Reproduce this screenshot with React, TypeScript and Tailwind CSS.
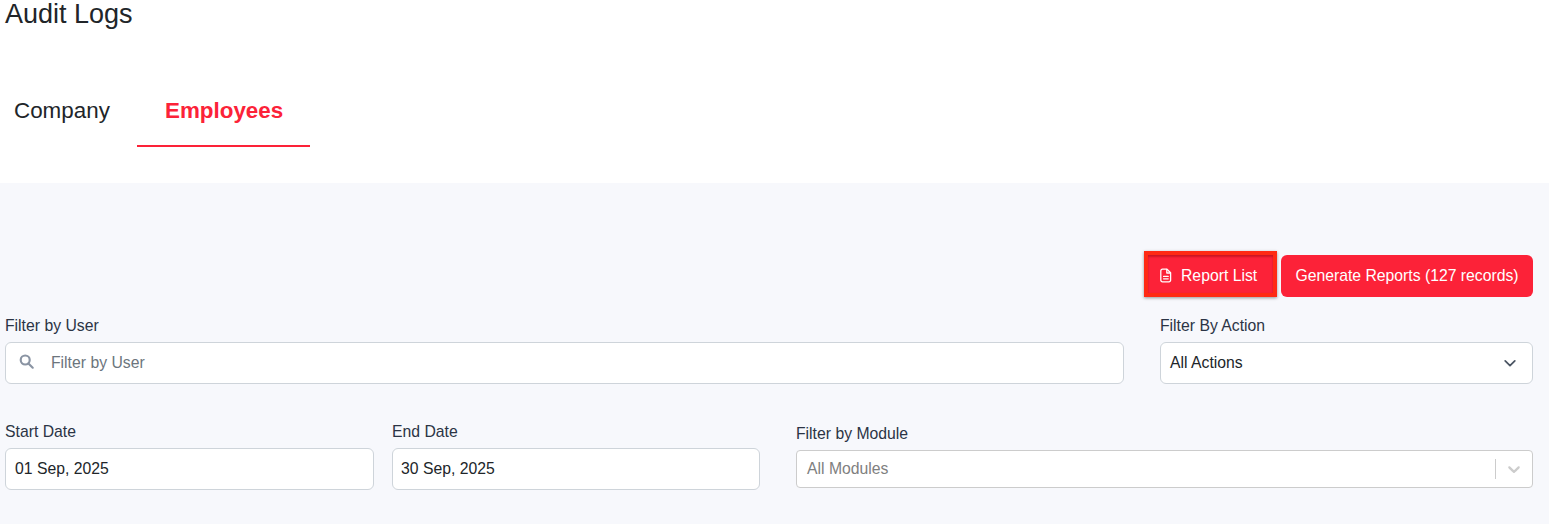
import React from "react";

const inputBox = "h-[42px] bg-white border border-[#ced4da] rounded-md flex items-center text-[15.75px]";
const label = "text-[15.75px] leading-[20px] text-[#2b3445] mb-[6px]";

function DocIcon() {
  return (
    <svg width="14" height="15" viewBox="0 0 14 15" fill="none" stroke="white" strokeWidth="1.3" strokeLinecap="round" strokeLinejoin="round">
      <path d="M3.4 1.2h4.6l3.6 3.6v7.4a1.6 1.6 0 0 1-1.6 1.6H3.4a1.6 1.6 0 0 1-1.6-1.6V2.8a1.6 1.6 0 0 1 1.6-1.6z" />
      <path d="M7.8 1.4v3.6h3.6" />
      <path d="M4.6 8.4h4.6M4.6 10.8h4.6" />
    </svg>
  );
}

export default function App() {
  return (
    <div className="w-[1549px] h-[524px] overflow-hidden bg-white font-['Liberation_Sans',sans-serif] text-[#212529]">
      <div className="h-[183px] bg-white">
        <h1 className="pl-[5px] text-[27px] leading-[29px] text-[#212529]">Audit Logs</h1>
        <div className="flex mt-[51px] text-[22.4px] leading-[30px]">
          <div className="w-[137px] pl-[14px] h-[67px] pt-[16px]">Company</div>
          <div className="w-[173px] h-[67px] pt-[16px] pl-[28px] font-bold text-[#fc2238] border-b-2 border-[#fc2238]">Employees</div>
        </div>
      </div>
      <div className="h-[341px] bg-[#f7f8fc] pl-[5px] pr-[16px]">
        <div className="flex justify-end items-end pt-[68px] gap-[4px]">
          <button className="relative h-[46px] w-[133px] flex items-center pl-[11px] pt-[3px] gap-[8px] bg-[#fc2238] border-[4px] border-[#ff2a14] text-white text-[15.75px] shadow-[0_1px_3px_rgba(0,0,0,0.4)]">
            <DocIcon />
            <span>Report List</span>
            <span className="absolute inset-0 shadow-[inset_0_2px_2px_rgba(120,0,0,0.35),inset_0_0_1px_rgba(120,0,0,0.3)]" />
          </button>
          <button className="h-[42px] w-[252px] rounded-md bg-[#fc2238] text-white text-[15.75px] font-medium">Generate Reports (127 records)</button>
        </div>
        <div className="flex gap-[36px] mt-[19px]">
          <div className="flex-1 flex flex-col">
            <div className={label}>Filter by User</div>
            <div className={inputBox + " text-[#6c757d]"}>
              <svg className="ml-[13px] mr-[17px] mb-[4px]" width="15" height="15" viewBox="0 0 14 14" fill="none" stroke="#8a94a3" strokeWidth="2">
                <circle cx="5.8" cy="5.6" r="4.2" />
                <path d="M8.8 8.8l4 4" strokeLinecap="round" />
              </svg>
              <span>Filter by User</span>
            </div>
          </div>
          <div className="w-[373px] flex flex-col">
            <div className={label}>Filter By Action</div>
            <div className={inputBox + " justify-between pl-[9px] pr-[15px]"}>
              <span>All Actions</span>
              <svg width="14" height="14" viewBox="0 0 16 16" fill="none" stroke="#4b5563" strokeWidth="2" strokeLinecap="round" strokeLinejoin="round">
                <path d="M2.5 5.5l5.5 5.5 5.5-5.5" />
              </svg>
            </div>
          </div>
        </div>
        <div className="flex mt-[38px] items-start">
          <div className="w-[369px] flex flex-col">
            <div className={label}>Start Date</div>
            <div className={inputBox + " pl-[9px]"}>01 Sep, 2025</div>
          </div>
          <div className="w-[368px] ml-[18px] flex flex-col">
            <div className={label}>End Date</div>
            <div className={inputBox + " pl-[8px]"}>30 Sep, 2025</div>
          </div>
          <div className="flex-1 ml-[36px] flex flex-col">
            <div className="text-[15.75px] leading-[20px] text-[#2b3445] mt-[2px] mb-[6px]">Filter by Module</div>
            <div className="h-[38px] bg-white border border-[#cccccc] rounded-[4px] flex items-center text-[15.75px] text-[#808080] pl-[10px]">
              <span className="flex-1">All Modules</span>
              <span className="w-px h-[20px] bg-[#cccccc]" />
              <svg className="mx-[8px]" width="20" height="20" viewBox="0 0 20 20" fill="#cccccc">
                <path d="M4.516 7.548c.436-.446 1.043-.481 1.576 0L10 11.295l3.908-3.747c.533-.481 1.141-.446 1.574 0 .436.445.408 1.197 0 1.615-.406.418-4.695 4.502-4.695 4.502a1.095 1.095 0 0 1-1.576 0S4.924 9.581 4.516 9.163c-.409-.418-.436-1.17 0-1.615z" />
              </svg>
            </div>
          </div>
        </div>
      </div>
    </div>
  );
}
